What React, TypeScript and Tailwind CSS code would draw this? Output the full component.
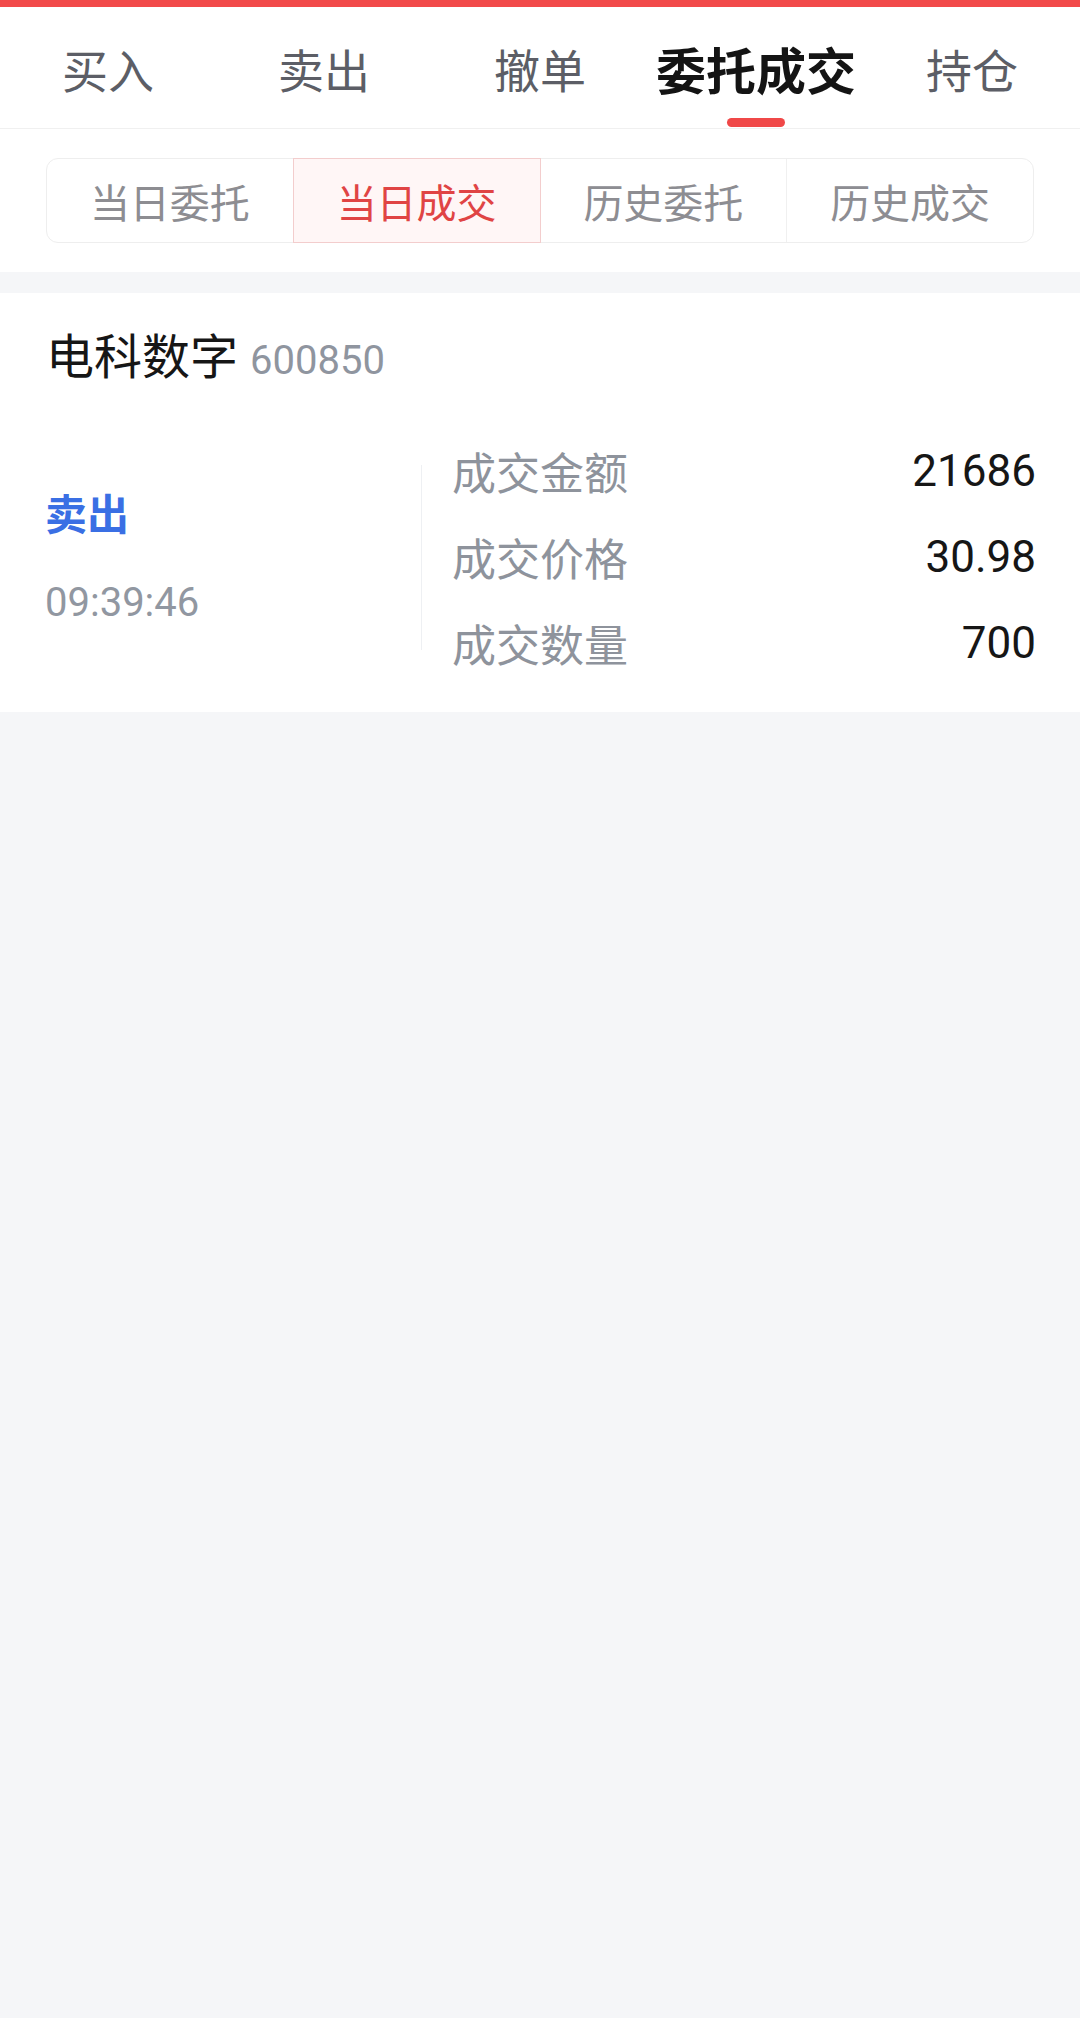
import React from 'react';

const cjk = "font-['Noto_Sans_CJK_SC','Noto_Sans',sans-serif]";
const num = "font-['Roboto','Noto_Sans_CJK_SC',sans-serif]";

const tabs = ['买入', '卖出', '撤单', '委托成交', '持仓'];
const segments = ['当日委托', '当日成交', '历史委托', '历史成交'];

const rows = [
  { label: '成交金额', value: '21686' },
  { label: '成交价格', value: '30.98' },
  { label: '成交数量', value: '700' },
];

export default function App() {
  const activeTab = 3;
  const activeSeg = 1;

  return (
    <div className={`min-h-[2018px] w-full bg-[#f5f6f8] ${cjk}`}>
      {/* top accent */}
      <div className="h-[7px] bg-[#f24a4a]" />

      {/* main tabs */}
      <div className="grid h-[122px] grid-cols-5 border-b border-[#f0f0f0] bg-white">
        {tabs.map((t, i) => (
          <div key={t} className="relative flex items-center justify-center">
            {i === activeTab ? (
              <span className="text-[50px] leading-[60px] font-bold text-[#141414]">{t}</span>
            ) : (
              <span className="text-[46px] leading-[60px] text-[#5c5e66]">{t}</span>
            )}
            {i === activeTab && (
              <span className="absolute bottom-[1px] h-[9px] w-[58px] rounded-full bg-[#f04848]" />
            )}
          </div>
        ))}
      </div>

      {/* segment switch */}
      <div className="bg-white px-[46px] py-[29px]">
        <div className="flex h-[85px] rounded-[12px] border border-[#eeeeee]">
          {segments.map((s, i) => (
            <div
              key={s}
              className={
                i === activeSeg
                  ? 'relative -my-px flex h-[85px] flex-1 items-center justify-center border border-[#f3cdcd] bg-[#fff6f6]'
                  : `flex flex-1 items-center justify-center ${i < segments.length - 1 && i + 1 !== activeSeg ? 'border-r border-[#f0f0f0]' : ''}`
              }
            >
              <span
                className={
                  i === activeSeg
                    ? 'text-[40px] leading-[50px] text-[#e04444]'
                    : 'text-[40px] leading-[50px] text-[#8d8d92]'
                }
              >
                {s}
              </span>
            </div>
          ))}
        </div>
      </div>

      {/* trade card */}
      <div className="mt-[21px] bg-white pb-[26px]">
        <div className="flex items-baseline gap-[12px] px-[46px] pt-[30px]">
          <span className="text-[48px] leading-[60px] text-[#161616]">电科数字</span>
          <span className={`${num} text-[40px] leading-[60px] text-[#8f959f]`}>600850</span>
        </div>

        <div className="mt-[37px] flex items-center">
          <div className="flex w-[421px] flex-col gap-[35px] pl-[45px]">
            <span className="text-[42px] leading-[56px] font-bold text-[#3a6fe4]">卖出</span>
            <span className={`${num} text-[40px] leading-[56px] text-[#9197a1]`}>09:39:46</span>
          </div>
          <div className="h-[185px] w-px bg-[#eef0f3]" />
          <div className="flex flex-1 flex-col pl-[30px] pr-[44px]">
            {rows.map((r) => (
              <div key={r.label} className="flex h-[86px] items-center justify-between">
                <span className="text-[44px] leading-[56px] text-[#8e939c]">{r.label}</span>
                <span className={`${num} text-[44px] leading-[56px] text-[#161616]`}>{r.value}</span>
              </div>
            ))}
          </div>
        </div>
      </div>
    </div>
  );
}
